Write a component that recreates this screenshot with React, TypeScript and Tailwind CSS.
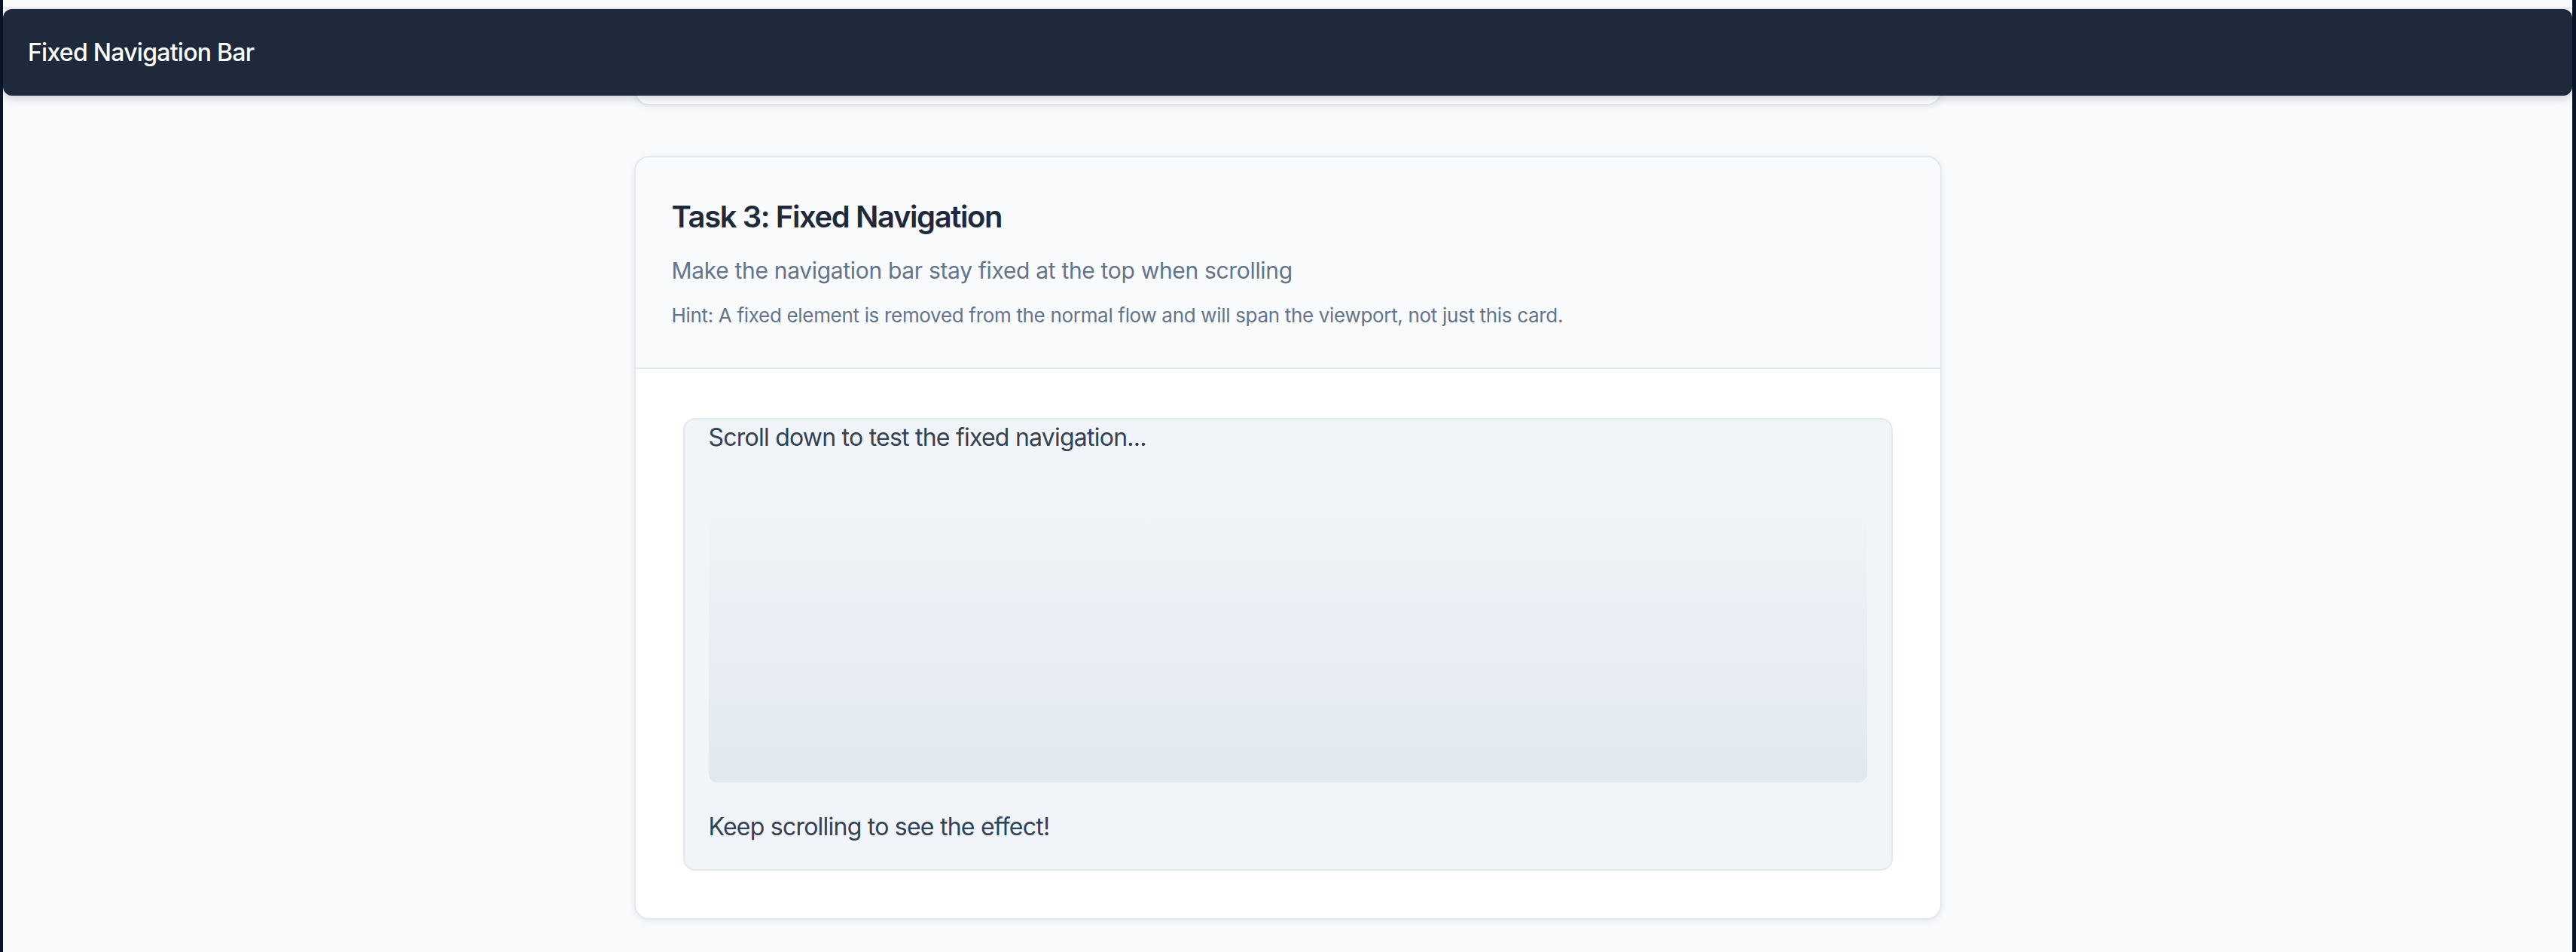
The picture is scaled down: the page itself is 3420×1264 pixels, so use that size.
import React from "react"

function TaskCard() {
  return (
    <section className="overflow-hidden rounded-[20px] border-2 border-[#e2e8f0] bg-white shadow-[0_2px_10px_rgba(15,23,42,0.07)]">
      <header className="border-b-2 border-[#e2e8f0] bg-[#f8fafc] px-[48px] pt-[51px] pb-[50px]">
        <h2 className="text-[40px] leading-[56px] font-semibold tracking-[-0.035em] text-[#1e293b]">Task 3: Fixed Navigation</h2>
        <p className="mt-[21px] text-[30px] leading-[45px] text-[#64748b]">
          Make the navigation bar stay fixed at the top when scrolling
        </p>
        <p className="mt-[18px] text-[26px] leading-[38px] text-[#64748b]">
          Hint: A fixed element is removed from the normal flow and will span the viewport, not just this card.
        </p>
      </header>
      <div className="px-[63px] pt-[65px] pb-[63px]">
        <div className="rounded-[16px] border-2 border-[#e2e8f0] bg-[#f1f5f9] px-[32px] pb-[32px]">
          <p className="text-[32px] leading-[48px] tracking-[-0.024em] text-[#334155]">Scroll down to test the fixed navigation...</p>
          <div className="mt-[32px] h-[402px] rounded-[12px] bg-linear-to-b from-[#f1f5f9] to-[#e2e8f0]" />
          <p className="mt-[35px] text-[32px] leading-[48px] tracking-[-0.024em] text-[#334155]">Keep scrolling to see the effect!</p>
        </div>
      </div>
    </section>
  )
}

export default function App() {
  return (
    <div className="flex h-[1264px] overflow-hidden bg-[#0a1428] font-[Inter,'Noto_Sans',sans-serif] tracking-[-0.02em]">
      <div className="ml-[4px] mr-[5px] flex flex-1 flex-col bg-[#f8fafc]">
        <div className="h-[12px] shrink-0 border-b-2 border-[#e5e7ee] bg-[#f9f9fc]" />
        <div className="relative flex-1 overflow-hidden">
          <nav className="absolute inset-x-0 top-0 z-10 flex h-[115px] items-center rounded-[12px] bg-[#1e293b] px-[33px] shadow-[0_4px_12px_rgba(15,23,42,0.18)]">
            <span className="text-[32px] font-medium tracking-[-0.023em] text-white">Fixed Navigation Bar</span>
          </nav>
          <main className="mx-auto mt-[-100px] flex w-[1736px] flex-col gap-[67px]">
            {/* previous task card, mostly scrolled under the nav */}
            <div className="h-[228px] rounded-[20px] border-2 border-[#e2e8f0] bg-white shadow-[0_2px_10px_rgba(15,23,42,0.07)]" />
            <TaskCard />
          </main>
        </div>
      </div>
    </div>
  )
}
